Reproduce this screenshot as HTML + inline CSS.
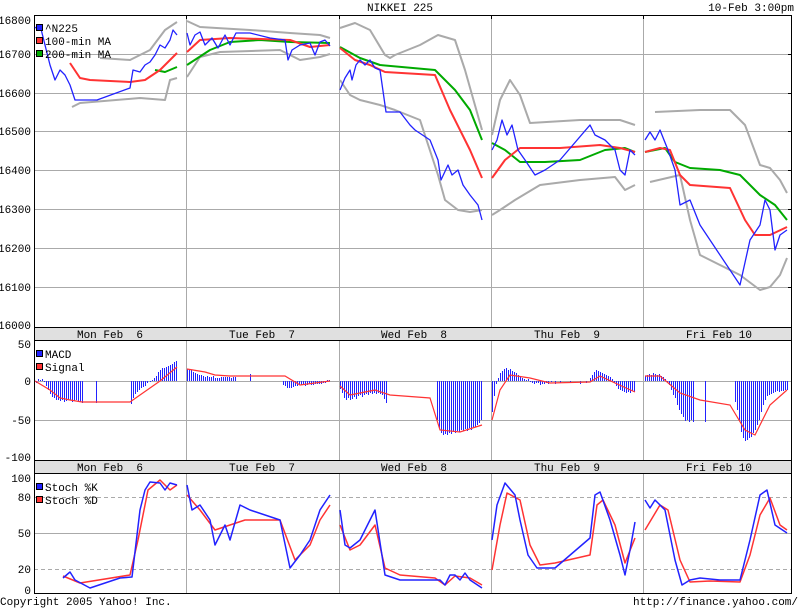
<!DOCTYPE html>
<html><head><style>
body{margin:0;background:#fff;width:800px;height:608px;overflow:hidden}
svg text{font-family:"Liberation Mono","DejaVu Sans Mono",monospace;font-size:11px;fill:#000;white-space:pre}
</style></head><body>
<svg width="800" height="608" viewBox="0 0 800 608" xmlns="http://www.w3.org/2000/svg" shape-rendering="crispEdges" xml:space="preserve">
<rect width="800" height="608" fill="#fff"/>
<text x="400" y="11" text-anchor="middle">NIKKEI 225</text>
<text x="794" y="11" text-anchor="end">10-Feb 3:00pm</text>
<g stroke="#aaa" stroke-width="1">
<path d="M34 54.5H792M34 93.5H792M34 131.5H792M34 170.5H792M34 209.5H792M34 248.5H792M34 287.5H792"/>
<path d="M186.5 15V327M339.5 15V327M491.5 15V327M643.5 15V327"/>
<path d="M186.5 340V460M339.5 340V460M491.5 340V460M643.5 340V460"/>
<path d="M186.5 473V593M339.5 473V593M491.5 473V593M643.5 473V593"/>
<path d="M34 381.5H792M34 420.5H792"/>
<path d="M34 533.5H792"/>
<path d="M34 497.5H792M34 569.5H792" stroke-dasharray="4,3"/>
</g>
<rect x="34.5" y="327.5" width="757" height="13" fill="#e0e0e0" stroke="#000"/>
<rect x="34.5" y="460.5" width="757" height="13" fill="#e0e0e0" stroke="#000"/>
<g text-anchor="middle">
<text x="110" y="338">Mon Feb  6</text><text x="262" y="338">Tue Feb  7</text><text x="414" y="338">Wed Feb  8</text><text x="567" y="338">Thu Feb  9</text><text x="719" y="338">Fri Feb 10</text>
<text x="110" y="471">Mon Feb  6</text><text x="262" y="471">Tue Feb  7</text><text x="414" y="471">Wed Feb  8</text><text x="567" y="471">Thu Feb  9</text><text x="719" y="471">Fri Feb 10</text>
</g>
<g stroke="#000" fill="none"><rect x="34.5" y="15.5" width="757" height="578"/>
<path d="M186.5 15v4M339.5 15v4M491.5 15v4M643.5 15v4M792 54.5h-4M792 93.5h-4M792 131.5h-4M792 170.5h-4M792 209.5h-4M792 248.5h-4M792 287.5h-4"/></g>
<g text-anchor="end">
<text x="31" y="24">16800</text><text x="31" y="58">16700</text><text x="31" y="97">16600</text><text x="31" y="135">16500</text><text x="31" y="174">16400</text><text x="31" y="213">16300</text><text x="31" y="252">16200</text><text x="31" y="291">16100</text><text x="31" y="329">16000</text>
<text x="31" y="348">50</text><text x="31" y="385">0</text><text x="31" y="424">-50</text><text x="31" y="461">-100</text>
<text x="31" y="482">100</text><text x="31" y="501">80</text><text x="31" y="537">50</text><text x="31" y="573">20</text><text x="31" y="594">0</text>
</g>
<text x="0" y="605">Copyright 2005 Yahoo! Inc.</text>
<text x="798" y="605" text-anchor="end">http://finance.yahoo.com/</text>
<g fill="none" stroke-width="2" shape-rendering="auto" stroke-linejoin="round">
<g stroke="#aaa">
<path d="M100 58L130 60L150 50L165 30L177 22"/><path d="M72 107L80 103L140 98L165 100L170 80L177 78"/>
<path d="M187 21L200 27L250 30L290 33L320 35L330 38"/><path d="M187 77L200 57L220 52L280 50L290 55L300 60L320 57L330 54"/>
<path d="M340 28L355 23L370 30L385 55L390 58L395 55L420 45L438 35L455 40L465 70L482 130"/><path d="M340 80L350 95L360 100L380 105L395 110L420 120L438 175L445 200L458 210L470 212L482 210"/>
<path d="M492 135L500 100L510 80L520 95L530 123L580 120L620 120L635 125"/><path d="M492 215L500 210L515 200L540 185L580 180L615 177L625 190L635 185"/>
<path d="M655 112L700 110L730 110L745 125L760 165L770 168L780 180L787 193"/><path d="M650 182L680 175L690 220L700 255L720 265L740 275L760 290L770 287L780 275L787 258"/>
</g>
<g stroke="#00aa00">
<path d="M155 70L165 72L177 67"/><path d="M187 65L210 50L230 42L260 40L290 42L330 43"/>
<path d="M340 47L360 58L380 65L435 70L455 90L470 110L482 140"/><path d="M492 143L505 150L520 162L545 162L580 160L605 150L625 148L635 152"/>
<path d="M645 152L665 148L675 162L690 168L720 170L740 175L760 195L775 205L787 220"/>
</g>
<g stroke="#ff3333">
<path d="M70 63L80 78L90 80L130 82L145 80L160 70L177 53"/><path d="M187 52L200 40L230 38L290 40L310 47L330 45"/>
<path d="M340 48L355 60L370 65L385 72L435 75L450 110L470 150L482 178"/><path d="M492 178L505 160L520 148L540 148L560 148L600 145L620 148L635 152"/>
<path d="M645 152L660 148L670 150L680 175L690 185L730 188L745 220L755 235L770 235L787 227"/>
</g>
</g>
<g fill="none" stroke="#2222ff" stroke-width="1.3" shape-rendering="auto" stroke-linejoin="round">
<path d="M35 28L40 25L45 45L50 65L55 80L60 70L65 75L70 85L75 100L85 100L97 100L130 88L133 70L140 72L145 65L150 62L155 55L160 45L165 48L170 40L173 30L177 35"/>
<path d="M187 33L190 45L195 35L200 32L205 45L212 38L218 48L225 35L230 45L236 33L250 33L270 38L285 40L288 60L292 50L300 45L310 43L315 55L320 42L325 40L330 46"/>
<path d="M340 90L345 78L350 70L352 80L356 65L360 60L365 65L370 60L375 68L380 70L386 112L400 112L410 125L415 130L430 140L438 160L441 180L448 165L452 175L458 170L463 185L470 195L478 205L482 220"/>
<path d="M492 150L497 140L502 120L507 135L512 125L518 150L525 160L535 175L545 170L560 160L590 125L595 135L605 140L615 150L620 170L625 175L630 150L635 155"/>
<path d="M645 140L650 132L655 140L660 130L668 150L675 170L680 205L690 200L700 225L740 285L750 240L760 225L765 200L770 210L775 250L780 235L787 230"/>
</g>
<g stroke="#2222ff" stroke-width="1" transform="translate(0.5,0)">
<path d="M36 381V383M38 381V379M40 381V380M42 381V379M44 381V382M46 381V386M48 381V390M50 381V394M52 381V397M54 381V398M56 381V400M58 381V400M60 381V401M62 381V400M64 381V402M66 381V401M68 381V400M70 381V400M72 381V402M74 381V401M76 381V400M78 381V401M80 381V402M82 381V403M96 381V403M131 381V404M133 381V398M135 381V394M137 381V392M139 381V390M141 381V388M143 381V387M145 381V386M147 381V383M150 381V382M152 381V380M154 381V378M156 381V376M158 381V372M160 381V370M162 381V368M164 381V368M166 381V367M168 381V366M170 381V365M172 381V364M174 381V362M176 381V361"/>
<path d="M187 381V369M189 381V369M191 381V370M193 381V372M195 381V373M197 381V374M199 381V375M201 381V375M203 381V376M205 381V377M207 381V376M209 381V377M211 381V377M213 381V376M215 381V378M217 381V378M219 381V378M221 381V377M223 381V377M225 381V377M227 381V377M229 381V377M231 381V378M233 381V377M235 381V377M250 381V374M283 381V385M285 381V386M287 381V388M289 381V388M291 381V388M293 381V387M295 381V386M297 381V386M299 381V385M301 381V385M303 381V385M305 381V386M307 381V385M309 381V384M311 381V385M313 381V385M315 381V384M317 381V384M319 381V384M321 381V384M323 381V383M325 381V383M327 381V380M329 381V380"/>
<path d="M340 381V389M342 381V393M344 381V398M346 381V400M348 381V398M350 381V400M352 381V399M354 381V397M356 381V399M358 381V396M360 381V395M362 381V397M364 381V395M366 381V394M368 381V395M370 381V393M372 381V394M374 381V393M376 381V394M378 381V393M380 381V394M382 381V395M384 381V399M386 381V403M437 381V420M439 381V428M441 381V433M443 381V435M445 381V434M447 381V435M449 381V433M451 381V434M453 381V432M455 381V433M457 381V431M459 381V432M461 381V430M463 381V431M465 381V429M467 381V431M469 381V428M471 381V430M473 381V428M475 381V427M477 381V425M479 381V423M481 381V420"/>
<path d="M492 381V412M494 381V396M496 381V384M498 381V378M500 381V373M502 381V371M504 381V369M506 381V368M508 381V370M510 381V369M512 381V371M514 381V372M516 381V373M518 381V375M520 381V376M522 381V378M524 381V379M526 381V380M528 381V379M530 381V382M532 381V383M534 381V384M536 381V383M538 381V383M540 381V385M542 381V384M544 381V384M546 381V383M548 381V384M551 381V382M555 381V384M560 381V383M570 381V383M580 381V384M586 381V383M590 381V378M592 381V375M594 381V372M596 381V370M598 381V371M600 381V372M602 381V373M604 381V374M606 381V375M608 381V376M610 381V377M612 381V379M614 381V383M616 381V386M618 381V389M620 381V390M622 381V391M624 381V392M626 381V393M628 381V392M630 381V393M632 381V391M634 381V392"/>
<path d="M645 381V376M647 381V375M649 381V374M651 381V375M653 381V373M655 381V374M657 381V375M659 381V374M661 381V376M663 381V377M665 381V379M667 381V382M669 381V385M671 381V390M673 381V395M675 381V398M677 381V405M679 381V410M681 381V414M683 381V417M685 381V421M687 381V420M689 381V422M691 381V420M693 381V422M705 381V422M735 381V402M737 381V410M739 381V420M741 381V432M743 381V438M745 381V441M747 381V440M749 381V438M751 381V437M753 381V433M755 381V430M757 381V425M759 381V420M761 381V412M763 381V405M765 381V400M767 381V396M769 381V395M771 381V394M773 381V393M775 381V392M777 381V391M779 381V392M781 381V391M783 381V391M785 381V390M787 381V390"/>
</g>
<g fill="none" stroke="#ff3333" stroke-width="1.2" shape-rendering="auto">
<path d="M35 381L50 390L60 398L70 400L82 402L130 402L140 395L160 381L177 367"/><path d="M187 369L205 372L215 375L230 376L285 376L300 385L330 381"/>
<path d="M340 386L350 395L360 393L375 390L390 395L430 398L440 430L460 432L482 425"/><path d="M492 420L500 390L510 375L530 378L550 383L590 382L600 376L615 383L635 392"/>
<path d="M645 376L660 376L680 393L700 400L730 405L745 430L755 435L770 405L787 390"/>
</g>
<g fill="none" stroke-width="1.5" shape-rendering="auto" stroke-linejoin="round">
<g stroke="#ff3333">
<path d="M63 576L80 583L130 575L138 540L148 490L160 480L170 490L177 485"/><path d="M187 495L200 510L215 530L245 520L280 520L295 560L310 545L320 520L330 505"/>
<path d="M340 525L350 550L360 545L375 525L385 568L400 575L435 578L445 585L455 576L470 578L482 585"/><path d="M492 570L500 525L507 493L520 500L530 545L540 565L555 563L590 555L597 505L603 500L615 525L625 563L635 538"/>
<path d="M645 530L660 505L668 510L680 560L690 582L710 581L740 582L750 555L760 515L770 498L780 525L787 530"/>
</g>
<g stroke="#2222ff">
<path d="M63 578L70 572L75 580L90 588L120 578L132 577L140 510L145 490L150 482L160 483L165 490L170 483L177 485"/><path d="M187 485L192 510L200 505L210 520L215 545L225 525L230 540L240 505L250 510L280 520L290 568L300 555L310 540L320 510L330 495"/>
<path d="M340 510L345 545L350 548L360 540L375 510L385 575L400 580L440 580L445 585L450 575L455 575L460 580L465 573L470 580L482 588"/><path d="M492 540L497 505L505 483L515 495L520 520L528 555L537 568L555 568L590 538L595 495L600 492L610 520L620 555L625 575L630 550L635 522"/>
<path d="M645 500L650 508L655 500L665 510L675 560L682 585L690 580L700 578L720 580L740 580L750 540L760 495L767 490L775 525L787 533"/>
</g>
</g>
<g stroke="#000" stroke-width="1">
<rect x="36.5" y="24.5" width="6" height="6" fill="#2222ff"/><rect x="36.5" y="37.5" width="6" height="6" fill="#ff3333"/><rect x="36.5" y="50.5" width="6" height="6" fill="#00aa00"/>
<rect x="36.5" y="350.5" width="6" height="6" fill="#2222ff"/><rect x="36.5" y="363.5" width="6" height="6" fill="#ff3333"/>
<rect x="36.5" y="483.5" width="6" height="6" fill="#2222ff"/><rect x="36.5" y="496.5" width="6" height="6" fill="#ff3333"/>
</g>
<text x="45" y="32">^N225</text><text x="45" y="45">100-min MA</text><text x="45" y="58">200-min MA</text>
<text x="45" y="358">MACD</text><text x="45" y="371">Signal</text>
<text x="45" y="491">Stoch %K</text><text x="45" y="504">Stoch %D</text>
</svg>
</body></html>
